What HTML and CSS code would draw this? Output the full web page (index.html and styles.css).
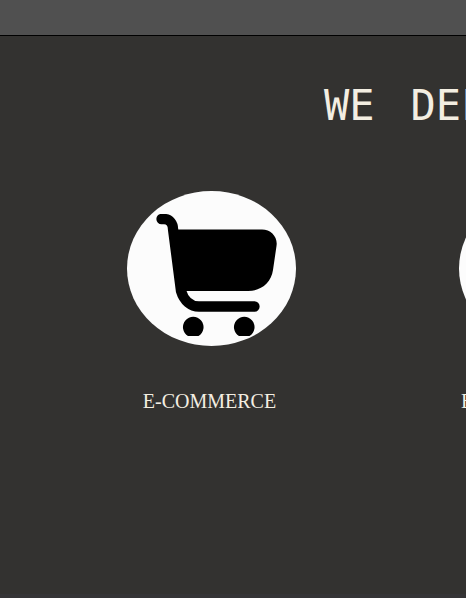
FILE: index.html
```html
<!DOCTYPE html>
<html lang="en">
<head>
<meta charset="utf-8">
<title>We deliver</title>
<link rel="stylesheet" href="styles.css">
</head>
<body>
<header class="topbar"></header>
<main class="services">
  <h1 class="title"><span>WE</span> <span>DEL</span></h1>
  <div class="cards">
    <section class="card">
      <div class="disc">
        <svg class="cart" viewBox="0 0 122 122" aria-hidden="true">
          <path d="M5.500 5H8C14 5 17 10 17 15L25 77C28 87 35 92.500 43 92.500H98.500" fill="none" stroke="#000" stroke-width="10.300" stroke-linecap="round" stroke-linejoin="round"/>
          <path d="M20 15.500H106C115 15.500 122 23 120.500 32L117 56C115 69 105 77 92 77H24Z"/>
          <path d="M32 122A10.300 10.300 0 1 1 42.500 122ZM83 122A10.300 10.300 0 1 1 93.500 122Z"/>
        </svg>
      </div>
      <h2 class="label">E-COMMERCE</h2>
    </section>
    <section class="card">
      <div class="disc"></div>
      <h2 class="label label-start">E</h2>
    </section>
  </div>
</main>
<footer class="bottom"></footer>
</body>
</html>
```
FILE: styles.css
```css
* { box-sizing: border-box; }
body {
  margin: 0;
  min-height: 100vh;
  display: flex;
  flex-direction: column;
  overflow: hidden;
  background: #333230;
  color: #f3eee2;
}
.topbar {
  height: 36px;
  background: #505050;
  border-bottom: 1px solid #000;
}
.services {
  flex: 1;
  padding-top: 46px;
}
.title {
  display: flex;
  gap: 36px;
  margin: 0;
  padding-left: 324px;
  font: 400 42px/48px "DejaVu Sans Mono", monospace;
  white-space: nowrap;
}
.cards {
  display: flex;
  gap: 163px;
  padding: 61px 0 0 127px;
}
.card {
  flex: none;
  width: 169px;
}
.disc {
  display: flex;
  height: 155px;
  padding: 23px 0 0 29px;
  border-radius: 50%;
  background: #fcfcfc;
}
.cart {
  width: 122px;
  height: 122px;
}
.label {
  margin: 43px 0 0;
  padding-right: 4px;
  text-align: center;
  font: 400 20px/24px "Liberation Serif", serif;
}
.label-start {
  padding-left: 2px;
  text-align: left;
}
.bottom {
  height: 4px;
  background: #353436;
}
```
